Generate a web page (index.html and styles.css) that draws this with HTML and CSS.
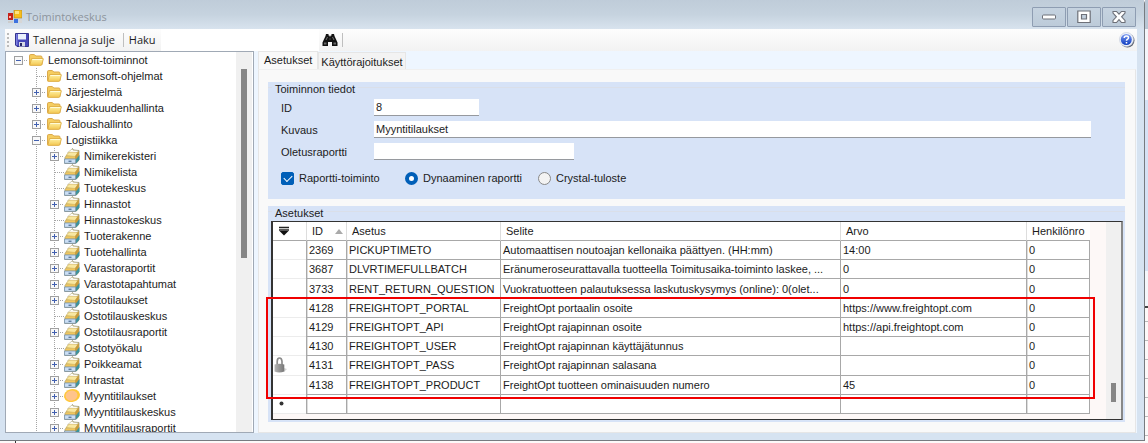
FILE: index.html
```html
<!DOCTYPE html>
<html lang="fi">
<head>
<meta charset="utf-8">
<title>Toimintokeskus</title>
<link rel="stylesheet" href="styles.css">
</head>
<body>
<svg width="0" height="0" class="defs" aria-hidden="true">
  <defs>
    <linearGradient id="gold" x1="0" y1="0" x2="0" y2="1"><stop offset="0" stop-color="#fff3a6"/><stop offset="1" stop-color="#f3c64f"/></linearGradient>
    <linearGradient id="blue" x1="0" y1="0" x2="0" y2="1"><stop offset="0" stop-color="#7f9cf0"/><stop offset="1" stop-color="#0c3cc0"/></linearGradient>
    <linearGradient id="steel" x1="0" y1="0" x2="1" y2="0"><stop offset="0" stop-color="#b5b5b5"/><stop offset="1" stop-color="#777"/></linearGradient>
    <symbol id="folder" viewBox="0 0 16 16">
      <path d="M1.500 12.500V3.800q0-1.300 1.200-1.300h3.600l1.500 1.500h5q1.200 0 1.200 1.200v7.300z" fill="#f5cd60" stroke="#dba94c"/>
      <path d="M1.800 13.200 3.600 6.500h11.300q.6 0 .4.700l-1.500 5.500q-.2.700-1 .7H2.300q-.6 0-.5-.2z" fill="url(#gold)" stroke="#dba73c" stroke-width=".8"/>
      <path d="M4.400 7.500h9.600" stroke="#fffbd8"/>
    </symbol>
    <symbol id="box" viewBox="0 0 16 16">
      <path d="M1 9.500 7 2l1.500-1.500 1 1.500 5.500.5v5.500l-.5 5-3 2.500H.8z" fill="#c9bb7c" stroke="#8d8a6c" stroke-width=".7"/>
      <path d="M3.500 4.500 8 1l1 1.200 5.500.8-3.500 3z" fill="#fff" stroke="#c5bd9b" stroke-width=".6"/>
      <path d="M2 7.500 5 4.200l9 .3-3 4z" fill="#f8e7a0" stroke="#d0ae51" stroke-width=".6"/>
      <path d="M1.500 8.500h9.500v2H1.200z" fill="#f2c65c"/>
      <path d="M11 8.500 14.800 3v6L11.500 13z" fill="#c99c3b"/>
      <path d="M11.800 11.500 15.500 7v4.500L12 15.500z" fill="#3c939c"/>
      <path d="M.6 11h11.100l-.2 4.300H.5z" fill="#cbdff5" stroke="#6d8aa3" stroke-width=".7"/>
      <path d="M4.500 13.200h3" stroke="#31547d"/>
    </symbol>
    <symbol id="plus" viewBox="0 0 9 9"><rect x=".5" y=".5" width="8" height="8" fill="#f8f8f8" stroke="#a0a0a0"/><path d="M2 4.500h5M4.500 2v5" stroke="#4260b0"/></symbol>
    <symbol id="minus" viewBox="0 0 9 9"><rect x=".5" y=".5" width="8" height="8" fill="#f8f8f8" stroke="#a0a0a0"/><path d="M2 4.500h5" stroke="#4260b0"/></symbol>
  </defs>
</svg>
<div class="window">
  <header class="titlebar">
    <svg width="14" height="14" viewBox="0 0 14 14" aria-hidden="true">
      <rect x="6" y="0" width="8" height="8" fill="#f7bd1c" stroke="#a98224" stroke-width=".6"/><rect x="7" y="1" width="4" height="3" fill="#ffe27c"/>
      <rect x="0" y="3" width="5" height="7" fill="#c62119"/><rect x="1" y="6" width="2" height="2" fill="#ffb4a5"/>
      <rect x="6" y="9" width="4" height="4" fill="#3d72df"/><rect x="11" y="9" width="3" height="4" fill="#d6d6d6"/><rect x="0" y="11" width="5" height="2" fill="#ccc"/>
    </svg>
    <h1>Toimintokeskus</h1>
    <div class="winbtns">
      <button aria-label="Pienennä"><svg width="14" height="14" viewBox="0 0 14 14"><rect x=".5" y="5" width="13" height="4" rx="1" fill="#fff" stroke="#6d7078"/></svg></button>
      <button aria-label="Suurenna"><svg width="14" height="14" viewBox="0 0 14 14"><path d="M.8 1h12.400v11.500H.8zM4.500 4.500v4.500h5V4.500z" fill="#fff" fill-rule="evenodd" stroke="#6d7078" stroke-width="1.200"/></svg></button>
      <button aria-label="Sulje"><svg width="14" height="14" viewBox="0 0 14 14"><path d="M1 1.500h3.500L7 4.200l2.500-2.700H13v1.500L9.600 6.800 13 10.500V12.500H9.500L7 9.700l-2.500 2.800H1v-2l3.400-3.700L1 3z" fill="#fff" stroke="#6d7078" stroke-width="1.100"/></svg></button>
    </div>
  </header>
  <div class="toolbar">
    <span class="grip"></span>
    <button class="tool"><svg width="14" height="14" viewBox="0 0 14 14" aria-hidden="true"><path d="M.5.500h13v13H2L.5 12z" fill="#4646b9" stroke="#34348f"/><path d="M3 1h8v5.500H3z" fill="#e9f0fc"/><path d="M1 1h1.500v11H1z" fill="#7d80e2"/><path d="M4 9h6v4.500H4z" fill="#d6d9e5"/><path d="M5 10h2v3H5z" fill="#272765"/></svg>Tallenna ja sulje</button>
    <span class="sep"></span>
    <label class="search"><span>Haku</span><input type="text"></label>
    <button class="tool find" aria-label="Etsi"><svg width="16" height="14" viewBox="0 0 16 14"><path d="M4 1h2.500v1.500h.8L8 4l.7-1.500h.8V1H12l.5 2 3 6.500V13H10V9H6v4H.5V9.500l3-6.500z" fill="#111"/><path d="M2 9.500h2.500v2H2zM11.500 9.500H14v2h-2.500z" fill="#666"/><path d="M5.500 4 4 7M10.500 4 12 7M7.500 6h1" stroke="#999" stroke-width=".7"/></svg></button>
    <span class="sep"></span>
    <button class="tool help" aria-label="Ohje"><svg width="16" height="16" viewBox="0 0 16 16"><circle cx="8.500" cy="8.500" r="7" fill="#5d6470"/><circle cx="7.500" cy="7.500" r="7" fill="#eef2fb" stroke="#c0c8d8" stroke-width=".6"/><circle cx="7.300" cy="7.500" r="5.500" fill="url(#blue)"/><path d="M5.200 6q.1-2 2.200-2 2.100 0 2.100 1.700 0 1-1.100 1.600-.9.500-.9 1.400M7.500 10v1.500" fill="none" stroke="#fff" stroke-width="1.500"/></svg></button>
  </div>
  <div class="body">
    <nav class="treepane" aria-label="Toiminnot">
      <div class="treeview">
        <ul class="tree">
          <li><div class="row"><span class="node"><button aria-label="Sulje haara"><svg><use href="#minus"/></svg></button></span><svg class="ic"><use href="#folder"/></svg>Lemonsoft-toiminnot</div>
          <ul>
            <li><div class="row"><span class="node leaf"></span><svg class="ic"><use href="#folder"/></svg>Lemonsoft-ohjelmat</div></li>
            <li><div class="row"><span class="node"><button aria-label="Avaa haara"><svg><use href="#plus"/></svg></button></span><svg class="ic"><use href="#folder"/></svg>Järjestelmä</div></li>
            <li><div class="row"><span class="node"><button aria-label="Avaa haara"><svg><use href="#plus"/></svg></button></span><svg class="ic"><use href="#folder"/></svg>Asiakkuudenhallinta</div></li>
            <li><div class="row"><span class="node"><button aria-label="Avaa haara"><svg><use href="#plus"/></svg></button></span><svg class="ic"><use href="#folder"/></svg>Taloushallinto</div></li>
            <li><div class="row"><span class="node"><button aria-label="Sulje haara"><svg><use href="#minus"/></svg></button></span><svg class="ic"><use href="#folder"/></svg>Logistiikka</div>
            <ul>
              <li><div class="row"><span class="node"><button aria-label="Avaa haara"><svg><use href="#plus"/></svg></button></span><svg class="ic"><use href="#box"/></svg>Nimikerekisteri</div></li>
              <li><div class="row"><span class="node leaf"></span><svg class="ic"><use href="#box"/></svg>Nimikelista</div></li>
              <li><div class="row"><span class="node leaf"></span><svg class="ic"><use href="#box"/></svg>Tuotekeskus</div></li>
              <li><div class="row"><span class="node"><button aria-label="Avaa haara"><svg><use href="#plus"/></svg></button></span><svg class="ic"><use href="#box"/></svg>Hinnastot</div></li>
              <li><div class="row"><span class="node leaf"></span><svg class="ic"><use href="#box"/></svg>Hinnastokeskus</div></li>
              <li><div class="row"><span class="node"><button aria-label="Avaa haara"><svg><use href="#plus"/></svg></button></span><svg class="ic"><use href="#box"/></svg>Tuoterakenne</div></li>
              <li><div class="row"><span class="node"><button aria-label="Avaa haara"><svg><use href="#plus"/></svg></button></span><svg class="ic"><use href="#box"/></svg>Tuotehallinta</div></li>
              <li><div class="row"><span class="node"><button aria-label="Avaa haara"><svg><use href="#plus"/></svg></button></span><svg class="ic"><use href="#box"/></svg>Varastoraportit</div></li>
              <li><div class="row"><span class="node"><button aria-label="Avaa haara"><svg><use href="#plus"/></svg></button></span><svg class="ic"><use href="#box"/></svg>Varastotapahtumat</div></li>
              <li><div class="row"><span class="node"><button aria-label="Avaa haara"><svg><use href="#plus"/></svg></button></span><svg class="ic"><use href="#box"/></svg>Ostotilaukset</div></li>
              <li><div class="row"><span class="node leaf"></span><svg class="ic"><use href="#box"/></svg>Ostotilauskeskus</div></li>
              <li><div class="row"><span class="node"><button aria-label="Avaa haara"><svg><use href="#plus"/></svg></button></span><svg class="ic"><use href="#box"/></svg>Ostotilausraportit</div></li>
              <li><div class="row"><span class="node leaf"></span><svg class="ic"><use href="#box"/></svg>Ostotyökalu</div></li>
              <li><div class="row"><span class="node"><button aria-label="Avaa haara"><svg><use href="#plus"/></svg></button></span><svg class="ic"><use href="#box"/></svg>Poikkeamat</div></li>
              <li><div class="row"><span class="node"><button aria-label="Avaa haara"><svg><use href="#plus"/></svg></button></span><svg class="ic"><use href="#box"/></svg>Intrastat</div></li>
              <li><div class="row"><span class="node"><button aria-label="Avaa haara"><svg><use href="#plus"/></svg></button></span><svg class="ic" viewBox="0 0 16 16"><ellipse cx="8" cy="7.500" rx="8" ry="6.500" fill="#ffc83a" transform="rotate(-12 8 7.500)"/><ellipse cx="7.500" cy="7.500" rx="6" ry="5" fill="#ffc48c" transform="rotate(-12 8 7.500)"/></svg>Myyntitilaukset</div></li>
              <li><div class="row"><span class="node"><button aria-label="Avaa haara"><svg><use href="#plus"/></svg></button></span><svg class="ic"><use href="#box"/></svg>Myyntitilauskeskus</div></li>
              <li><div class="row"><span class="node"><button aria-label="Avaa haara"><svg><use href="#plus"/></svg></button></span><svg class="ic"><use href="#box"/></svg>Myyntitilausraportit</div></li>
            </ul></li>
          </ul></li>
        </ul>
      </div>
      <div class="scroll"><div class="thumb"></div></div>
    </nav>
    <main class="content">
      <div class="tabs" role="tablist">
        <button role="tab" class="tab active" aria-selected="true">Asetukset</button>
        <button role="tab" class="tab" aria-selected="false">Käyttörajoitukset</button>
      </div>
      <div class="panel" role="tabpanel">
        <section class="group">
          <h2>Toiminnon tiedot</h2>
          <form class="form">
            <label for="id">ID</label><input class="short" id="id" type="text" value="8">
            <label for="kuvaus">Kuvaus</label><input id="kuvaus" type="text" value="Myyntitilaukset">
            <label for="oletus">Oletusraportti</label><input class="medium" id="oletus" type="text">
            <div class="options">
              <label><input type="checkbox" checked>Raportti-toiminto</label>
              <label><input type="radio" name="tyyppi" checked>Dynaaminen raportti</label>
              <label><input type="radio" name="tyyppi">Crystal-tuloste</label>
            </div>
          </form>
        </section>
        <section class="group">
          <h2>Asetukset</h2>
          <div class="gridwrap">
            <div class="grid">
              <div class="tablearea">
              <table>
                <colgroup><col class="c-mark"><col class="c-id"><col class="c-set"><col><col class="c-val"><col class="c-num"></colgroup>
                <thead><tr><th><svg width="12" height="10" viewBox="0 0 12 10"><path d="M1 1.500h10M1 4h10" stroke="#222" stroke-width="1.500"/><path d="M1.500 5h9L6 9.500z" fill="#111"/></svg></th><th><span class="sorted">ID<svg width="8" height="5" viewBox="0 0 8 5"><path d="M4 0 8 5H0z" fill="#aaa"/></svg></span></th><th>Asetus</th><th>Selite</th><th>Arvo</th><th>Henkilönro</th></tr></thead>
                <tbody>
                  <tr><td></td><td>2369</td><td>PICKUPTIMETO</td><td>Automaattisen noutoajan kellonaika päättyen. (HH:mm)</td><td>14:00</td><td>0</td></tr>
                  <tr><td></td><td>3687</td><td>DLVRTIMEFULLBATCH</td><td>Eränumeroseurattavalla tuotteella Toimitusaika-toiminto laskee, ...</td><td>0</td><td>0</td></tr>
                  <tr><td></td><td>3733</td><td>RENT_RETURN_QUESTION</td><td>Vuokratuotteen palautuksessa laskutuskysymys (online): 0(olet...</td><td>0</td><td>0</td></tr>
                  <tr><td></td><td>4128</td><td>FREIGHTOPT_PORTAL</td><td>FreightOpt portaalin osoite</td><td>https://www.freightopt.com</td><td>0</td></tr>
                  <tr><td></td><td>4129</td><td>FREIGHTOPT_API</td><td>FreightOpt rajapinnan osoite</td><td>https://api.freightopt.com</td><td>0</td></tr>
                  <tr><td></td><td>4130</td><td>FREIGHTOPT_USER</td><td>FreightOpt rajapinnan käyttäjätunnus</td><td></td><td>0</td></tr>
                  <tr><td class="lock"><svg width="13" height="16" viewBox="0 0 13 16"><path d="M3.200 8V4.500Q3.200 1 5.500 1t2.500 3.500V8" fill="none" stroke="#8c8c8c" stroke-width="1.700"/><path d="m10 11 3 1-3 3z" fill="#d5d5d5"/><path d="M.5 7.500q5-1.500 9.800 0v7q-5 2-9.800 0z" fill="url(#steel)"/></svg></td><td>4131</td><td>FREIGHTOPT_PASS</td><td>FreightOpt rajapinnan salasana</td><td></td><td>0</td></tr>
                  <tr><td></td><td>4138</td><td>FREIGHTOPT_PRODUCT</td><td>FreightOpt tuotteen ominaisuuden numero</td><td>45</td><td>0</td></tr>
                  <tr><td class="new"><svg width="5" height="5" viewBox="0 0 5 5"><circle cx="2.500" cy="2.500" r="2" fill="#333"/></svg></td><td></td><td></td><td></td><td></td><td></td></tr>
                </tbody>
              </table>
              </div>
              <div class="scroll gridscroll"><div class="thumb"></div></div>
            </div>
            <div class="highlight"></div>
          </div>
        </section>
      </div>
    </main>
  </div>
</div>
</body>
</html>
```
FILE: styles.css
```css
* { box-sizing: border-box; }
body {
  margin: 0;
  height: 100vh;
  display: flex;
  padding: 0 3px 2px 0;
  overflow: hidden;
  font: 11px/16px "Liberation Sans", Arial, sans-serif;
  color: #1c1c1c;
  background:
    linear-gradient(#333, #333) 15px 100% / 1px 3px no-repeat,
    linear-gradient(#b9c7d5 0 29px, #f4f6fa 29px 100px, #d6e2f5 100px 271px, #f5f7fb 271px 306px, #444 306px 308px, transparent 308px) 100% 0 / 3px 100% no-repeat,
    repeating-linear-gradient(#fdf9f9 0 18px, #bbb 18px 19px) 0 18px;
}
.defs { position: absolute; }
button, input { font: inherit; color: inherit; }
button { padding: 0; border: 0; background: none; }
svg { display: block; flex: none; }
h1, h2 { margin: 0; font-weight: normal; }

.window {
  flex: 1;
  min-width: 0;
  display: flex;
  flex-direction: column;
  background: #d6e3f1;
  border: solid #777b80;
  border-width: 0 1px 1px 0;
  border-top-right-radius: 4px;
}
.titlebar {
  flex: none;
  height: 29px;
  display: flex;
  align-items: center;
  gap: 4px;
  padding: 4px 8px 0;
  background: linear-gradient(#bfccd9, #c6d3df 50%, #d8e3ee);
}
.titlebar h1 { flex: 1; font: 11px/20px "Open Sans", sans-serif; color: #8d949d; }
.winbtns { display: flex; gap: 1px; }
.winbtns button {
  width: 34px;
  height: 20px;
  display: grid;
  place-items: center;
  border: 1px solid #8e9db2;
  border-radius: 1px;
  background: linear-gradient(#c6d3e0, #bdcbd9);
}
.toolbar {
  flex: none;
  height: 22px;
  margin: 0 7px 0 5px;
  padding: 0 2px;
  display: flex;
  align-items: center;
  background: linear-gradient(#fdfdfd, #f2f2f2);
  font: 11px/20px "Open Sans", sans-serif;
}
.grip { width: 2px; height: 14px; margin-right: 6px; background: repeating-linear-gradient(#bbb 0 2px, transparent 2px 4px); }
.tool { display: flex; align-items: center; gap: 4px; }
.sep { width: 1px; height: 14px; margin: 0 5px 0 8px; background: #bfbfbf; }
.search { display: flex; align-items: center; align-self: stretch; }
.search span { width: 32px; }
.search input { width: 158px; height: 22px; border: 0; background: #fff; padding: 0 4px; }
.find { margin-left: 3px; }
.find + .sep { margin-left: 4px; }
.help { margin-left: auto; }

.body { flex: 1; min-height: 0; display: flex; padding: 0 7px 7px 5px; }
.treepane {
  width: 249px;
  flex: none;
  display: flex;
  background: #fff;
  border: 1px solid #a0a9b5;
  padding-right: 1px;
}
.treeview { flex: 1; overflow: hidden; }
.tree, .tree ul { list-style: none; margin: 0; padding: 0; }
.tree ul { background: repeating-linear-gradient(#a5a5a5 0 1px, transparent 1px 2px) 30px 0 / 1px 100% no-repeat; }
.tree ul ul { background-position-x: 48px; }
.row { height: 16px; display: flex; align-items: center; padding-left: 8px; white-space: nowrap; }
.tree ul .row { padding-left: 26px; }
.tree ul ul .row { padding-left: 44px; }
.node { width: 14px; display: flex; background: repeating-linear-gradient(90deg, #a5a5a5 0 1px, transparent 1px 2px) 0 4px / 100% 1px no-repeat; }
.leaf { height: 9px; background-position-x: 5px; }
.node svg { width: 9px; height: 9px; }
.ic { width: 16px; height: 16px; margin-right: 4px; }
.scroll { width: 16px; flex: none; background: #f0f0f0; padding: 17px 5px 0; }
.thumb { width: 6px; height: 189px; background: #868686; }

.content { flex: 1; min-width: 0; display: flex; flex-direction: column; padding: 0 1px 0 4px; background: #eef6ff; }
.tabs { flex: none; display: flex; align-items: flex-end; height: 18px; }
.tab { height: 17px; padding: 1px 2px 0; background: #f3f3f3; border: 1px solid #e6e6e6; border-bottom: 0; }
.tab.active { height: 18px; padding: 0 5px 1px; background: #f9f9f9; }
.panel {
  flex: 1;
  display: flex;
  flex-direction: column;
  gap: 7px;
  padding: 12px 10px 10px 9px;
  background: #f9f9f9;
  border: 1px solid #e6e6e6;
  border-top-color: #f0f0f0;
}
.group { background: linear-gradient(#dadfe9, #dadfe9) 0 5px / 100% 1px no-repeat #d7e3f7; padding: 0 2px 2px 3px; }
.group h2 { width: max-content; padding: 0 3px; margin-left: 1px; font-size: 11px; line-height: 15px; background: #d7e3f7; }
.form {
  display: grid;
  grid-template-columns: 93px 1fr;
  row-gap: 5px;
  align-items: center;
  padding: 2px 32px 11px 10px;
}
.form > label { line-height: 15px; padding-top: 2px; }
.form > input { width: 100%; height: 17px; padding: 0 2px; border: 0; border-bottom: 1px solid #96999e; background: #fff; outline: 0; }
.form > .short { width: 105px; }
.form > .medium { width: 200px; }
.options { grid-column: 1 / -1; display: grid; grid-template-columns: 124px 133px auto; margin-top: 5px; }
.options label { display: flex; align-items: center; gap: 5px; }
.options input { appearance: none; width: 13px; height: 13px; margin: 0; border: 1px solid #888; background: #f3f3f3; }
.options input[type="radio"] { border-radius: 50%; }
.options input[type="radio"]:checked { border: 4px solid #005fb8; background: #fff; }
.options input[type="checkbox"]:checked { border-color: #005fb8; border-radius: 2px; background: #005fb8; display: grid; place-items: center; }
.options input[type="checkbox"]:checked::before { content: ""; width: 7px; height: 4px; margin-bottom: 2px; border: solid #fff; border-width: 0 0 1px 1px; transform: rotate(-45deg); }

.gridwrap { position: relative; }
.grid { display: flex; border: 1px solid #333; border-right: 2px solid #888; border-left-width: 2px; background: #fdf8f7; }
.tablearea { flex: 1; min-width: 0; padding: 0 16px 5px 0; }
table { width: 100%; height: 192px; table-layout: fixed; border-collapse: separate; border-spacing: 0; background: #fff; }
tr { height: 19px; }
.c-mark { width: 33px; }
.c-id { width: 40px; }
.c-set { width: 154px; }
.c-val { width: 186px; }
.c-num { width: 64px; }
th, td { padding: 0 0 0 2px; border: solid #a8a8a8; border-width: 0 0 1px 1px; text-align: left; font-weight: normal; line-height: 16px; white-space: nowrap; overflow: hidden; }
th { padding-left: 5px; border-left-color: #ddd; }
td:last-child { border-right-width: 1px; }
td:first-child { border-color: #ececec; border-left: 0; }
th:first-child { border-left: 0; }
td:nth-child(2), td:nth-child(3), td:nth-child(6) { box-shadow: inset 1px 0 #ddd; }
.sorted { display: flex; align-items: center; justify-content: space-between; padding-right: 3px; }
td.lock { padding-left: 1px; }
td.new { padding-left: 6px; }
.gridscroll { width: 15px; padding: 161px 5px 0; }
.gridscroll .thumb { width: 5px; height: 19px; }
.highlight { position: absolute; left: -5px; right: 28px; top: 76px; height: 102px; border: 2px solid #f00000; pointer-events: none; }
```
